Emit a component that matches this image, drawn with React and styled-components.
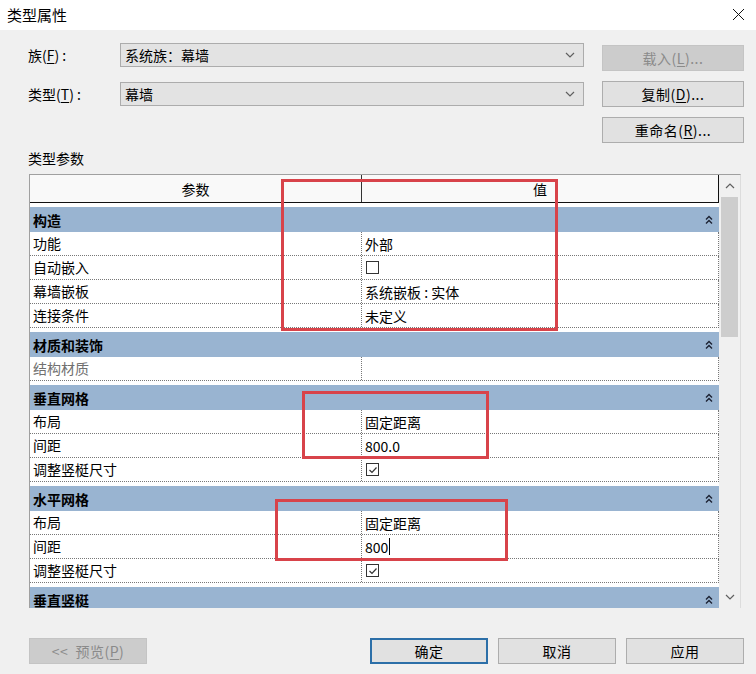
import React from 'react';
import styled, { createGlobalStyle } from 'styled-components';

const groups = [
	{
		title: '构造',
		rows: [
			{ name: '功能', value: '外部' },
			{ name: '自动嵌入', check: false },
			{ name: '幕墙嵌板', value: '系统嵌板 : 实体' },
			{ name: '连接条件', value: '未定义' },
		],
	},
	{ title: '材质和装饰', rows: [{ name: '结构材质', value: '', disabled: true }] },
	{
		title: '垂直网格',
		rows: [
			{ name: '布局', value: '固定距离' },
			{ name: '间距', value: '800.0' },
			{ name: '调整竖梃尺寸', check: true },
		],
	},
	{
		title: '水平网格',
		rows: [
			{ name: '布局', value: '固定距离' },
			{ name: '间距', value: '800', editing: true },
			{ name: '调整竖梃尺寸', check: true },
		],
	},
	{ title: '垂直竖梃', rows: [] },
];

// 빨간 표시 박스 (스크린샷 위 주석)
const marks = [
	{ left: 281, top: 179, width: 277, height: 152 },
	{ left: 302, top: 391, width: 187, height: 68 },
	{ left: 275, top: 499, width: 233, height: 62 },
];

const Chevron = ({ up }) => (
	<svg width="10" height="6" viewBox="0 0 10 6">
		<polyline
			points={up ? '1,5 5,1 9,5' : '1,1 5,5 9,1'}
			fill="none"
			stroke="#606060"
			strokeWidth="1.2"
		/>
	</svg>
);

const DoubleCaret = () => (
	<svg width="8" height="10" viewBox="0 0 8 10">
		<polyline points="1,4.5 4,1.5 7,4.5" fill="none" stroke="#1c2233" strokeWidth="1.4" />
		<polyline points="1,8.5 4,5.5 7,8.5" fill="none" stroke="#1c2233" strokeWidth="1.4" />
	</svg>
);

export default function App() {
	return (
		<>
			<GlobalStyle />
			<Window>
				<TitleBar>
					<span>类型属性</span>
					<svg width="13" height="13" viewBox="0 0 13 13">
						<path d="M1 1L12 12M12 1L1 12" stroke="#111" strokeWidth="1" />
					</svg>
				</TitleBar>

				<TopSection>
					<FieldCol>
						<Field>
							<FieldLabel>
								族(<u>F</u>) :
							</FieldLabel>
							<Combo>
								<span>系统族：幕墙</span>
								<Chevron />
							</Combo>
						</Field>
						<Field>
							<FieldLabel>
								类型(<u>T</u>) :
							</FieldLabel>
							<Combo>
								<span>幕墙</span>
								<Chevron />
							</Combo>
						</Field>
					</FieldCol>
					<ButtonCol>
						<Button disabled>
							载入(<u>L</u>)...
						</Button>
						<Button>
							复制(<u>D</u>)...
						</Button>
						<Button>
							重命名(<u>R</u>)...
						</Button>
					</ButtonCol>
				</TopSection>

				<SectionLabel>类型参数</SectionLabel>

				<Table>
					<Grid>
						<HeaderRow>
							<HeaderCell $first>参数</HeaderCell>
							<HeaderCell>值</HeaderCell>
						</HeaderRow>
						{groups.map((group) => (
							<React.Fragment key={group.title}>
								<GroupRow>
									<span>{group.title}</span>
									<DoubleCaret />
								</GroupRow>
								{group.rows.map((row, i) => (
									<DataRow key={i}>
										<NameCell $disabled={row.disabled}>{row.name}</NameCell>
										<ValueCell>
											{row.check === undefined ? (
												<>
													{row.value}
													{row.editing && <Caret />}
												</>
											) : (
												<CheckBox>
													{row.check && (
														<svg width="10" height="10" viewBox="0 0 10 10">
															<polyline
																points="1.5,5 4,7.5 8.5,2.5"
																fill="none"
																stroke="#333"
																strokeWidth="1.2"
															/>
														</svg>
													)}
												</CheckBox>
											)}
										</ValueCell>
									</DataRow>
								))}
							</React.Fragment>
						))}
					</Grid>
					<ScrollBar>
						<ScrollArrow>
							<Chevron up />
						</ScrollArrow>
						<ScrollTrack>
							<ScrollThumb />
						</ScrollTrack>
						<ScrollArrow>
							<Chevron />
						</ScrollArrow>
					</ScrollBar>
				</Table>

				<BottomRow>
					<Button disabled $wide>
						&lt;&lt;&nbsp; 预览(<u>P</u>)
					</Button>
					<BottomRight>
						<Button $wide $focused>
							确定
						</Button>
						<Button $wide>取消</Button>
						<Button $wide>应用</Button>
					</BottomRight>
				</BottomRow>

				{marks.map((m, i) => (
					<Mark key={i} style={{ left: m.left, top: m.top, width: m.width, height: m.height }} />
				))}
			</Window>
		</>
	);
}

const GlobalStyle = createGlobalStyle`
	* { box-sizing: border-box; }
	body {
		margin: 0;
		background: #f0f0f0;
		font-family: "Noto Sans CJK SC", "Noto Sans", sans-serif;
		color: #000;
	}
	u { text-underline-offset: 2px; }
`;

const Window = styled.div`
	position: relative;
	width: 756px;
	height: 674px;
	overflow: hidden;
	background: #f0f0f0;
	font-size: 14px;
`;

const TitleBar = styled.div`
	display: flex;
	justify-content: space-between;
	align-items: center;
	height: 30px;
	padding: 0 11px 2px 7px;
	background: #fff;
	font-size: 15px;
`;

const TopSection = styled.div`
	display: flex;
	justify-content: space-between;
	padding: 13px 12px 0 28px;
`;

const FieldCol = styled.div`
	display: flex;
	flex-direction: column;
	gap: 15px;
`;

const Field = styled.div`
	display: flex;
	align-items: center;
	height: 24px;
`;

const FieldLabel = styled.div`
	width: 92px;
	font-size: 14px;
`;

const Combo = styled.div`
	display: flex;
	justify-content: space-between;
	align-items: center;
	width: 464px;
	height: 24px;
	padding: 0 8px 0 4px;
	background: #e3e3e3;
	border: 1px solid #acacac;
	font-size: 14px;
`;

const ButtonCol = styled.div`
	display: flex;
	flex-direction: column;
	gap: 10px;
	margin-top: 2px;
`;

const Button = styled.button`
	width: ${(p) => (p.$wide ? '118px' : '142px')};
	height: 26px;
	padding: 0;
	font-family: inherit;
	font-size: 14px;
	letter-spacing: 0.5px;
	color: ${(p) => (p.disabled ? '#8a8a8a' : '#000')};
	background: ${(p) => (p.disabled ? '#cccccc' : '#e1e1e1')};
	border: ${(p) => (p.$focused ? '2px solid #2c6fa8' : p.disabled ? '1px solid #c4c4c4' : '1px solid #adadad')};
`;

const SectionLabel = styled.div`
	margin-top: 5px;
	padding-left: 28px;
	line-height: 20px;
	font-size: 14px;
`;

const Table = styled.div`
	display: flex;
	height: 434px;
	margin: 6px 15px 0 29px;
	border-top: 1px solid #a0a0a0;
	border-left: 1px solid #a0a0a0;
	border-right: 1px solid #dcdcdc;
	overflow: hidden;
`;

const Grid = styled.div`
	flex: 1;
	background: #fff;
	overflow: hidden;
`;

const HeaderRow = styled.div`
	display: flex;
	height: 28px;
	background: #f9f9f9;
	border-bottom: 1px solid #111;
	border-right: 1px solid #111;
`;

const HeaderCell = styled.div`
	display: flex;
	align-items: center;
	justify-content: center;
	width: ${(p) => (p.$first ? '332px' : 'auto')};
	flex: ${(p) => (p.$first ? 'none' : '1')};
	border-right: ${(p) => (p.$first ? '1px solid #333' : 'none')};
	font-size: 14px;
`;

const GroupRow = styled.div`
	display: flex;
	justify-content: space-between;
	align-items: center;
	height: 25px;
	margin-top: 4px;
	padding: 0 6px 0 3px;
	background: #99b4d1;
	font-weight: bold;
	font-size: 14px;
`;

const DataRow = styled.div`
	display: flex;
	height: 24px;
	border-bottom: 1px dotted #777;
	border-right: 1px dotted #777;
`;

const NameCell = styled.div`
	width: 332px;
	padding-left: 3px;
	line-height: 23px;
	border-right: 1px dotted #777;
	color: ${(p) => (p.$disabled ? '#707070' : '#000')};
`;

const ValueCell = styled.div`
	flex: 1;
	display: flex;
	align-items: center;
	padding-left: 3px;
	font-size: 14px;
`;

const Caret = styled.span`
	width: 1px;
	height: 17px;
	margin-left: 1px;
	background: #000;
`;

const CheckBox = styled.div`
	display: flex;
	align-items: center;
	justify-content: center;
	width: 13px;
	height: 13px;
	margin-left: 1px;
	border: 1px solid #333;
	background: #fff;
`;

const ScrollBar = styled.div`
	display: flex;
	flex-direction: column;
	width: 21px;
	background: #f0f0f0;
`;

const ScrollArrow = styled.div`
	display: flex;
	align-items: center;
	justify-content: center;
	height: 22px;
`;

const ScrollTrack = styled.div`
	flex: 1;
	padding: 0 2px;
`;

const ScrollThumb = styled.div`
	height: 140px;
	background: #cdcdcd;
`;

const BottomRow = styled.div`
	display: flex;
	justify-content: space-between;
	padding: 30px 12px 0 29px;
`;

const BottomRight = styled.div`
	display: flex;
	gap: 10px;
`;

const Mark = styled.div`
	position: absolute;
	border: 3px solid #d8434a;
	pointer-events: none;
`;
